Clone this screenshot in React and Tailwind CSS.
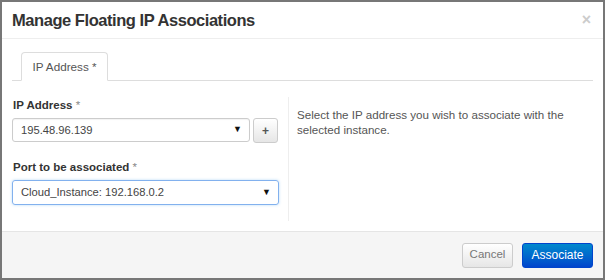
import React from "react";

export default function App() {
  return (
    <div className="w-[605px] h-[280px] bg-[#777] p-[2px] box-border" style={{ fontFamily: '"Liberation Sans", Arial, sans-serif' }}>
      <div className="w-full h-full bg-white flex flex-col">
        {/* header */}
        <div className="h-[37px] border-b border-[#eeeeee] flex items-center justify-between pl-[10px] pr-[12px] shrink-0">
          <h3 className="text-[16.5px] tracking-[-0.45px] font-bold text-[#333] leading-none">Manage Floating IP Associations</h3>
          <span className="text-[16px] font-bold text-[#ccc] leading-none">×</span>
        </div>
        {/* body */}
        <div className="flex-1 px-[10px] pt-[13px]">
          <div className="flex border-b border-[#dddddd] h-[29px]">
            <div className="ml-[9px] w-[87px] border border-[#dddddd] border-b-white rounded-t-[4px] bg-white -mb-px flex items-center justify-center text-[11.7px] text-[#555]">
              IP Address *
            </div>
          </div>
          <div className="flex mt-[16px]">
            <div className="w-[277px] pr-[10px] border-r border-[#eeeeee] pb-[16px]">
              <div className="text-[11.5px] font-bold text-[#333] leading-[16px] pl-[1px]">IP Address <span className="font-normal text-[#888]">*</span></div>
              <div className="flex gap-[3px] mt-[5px]">
                <div className="w-[238px] h-[24px] border border-[#ccc] rounded-[3px] flex items-center justify-between pl-[8px] pr-[7px] text-[11.2px] text-[#444] shadow-[inset_0_1px_1px_rgba(0,0,0,0.05)]">
                  <span>195.48.96.139</span>
                  <span className="text-[9px] text-[#111]">▼</span>
                </div>
                <div className="w-[25px] h-[25px] border border-[#ccc] rounded-[3px] bg-gradient-to-b from-white to-[#e6e6e6] flex items-center justify-center text-[12px] font-bold text-[#555]">+</div>
              </div>
              <div className="text-[11.5px] font-bold text-[#333] leading-[16px] pl-[1px] mt-[16px]">Port to be associated <span className="font-normal text-[#888]">*</span></div>
              <div className="w-[267px] h-[25px] mt-[5px] border border-[#82b1ee] rounded-[3px] flex items-center justify-between pl-[8px] pr-[7px] text-[11.2px] text-[#444] shadow-[0_0_3px_rgba(82,168,236,0.4)]">
                <span>Cloud_Instance: 192.168.0.2</span>
                <span className="text-[9px] text-[#111]">▼</span>
              </div>
            </div>
            <div className="pl-[8px] pt-[10px] text-[11.6px] text-[#555] leading-[15px] w-[290px]">
              Select the IP address you wish to associate with the selected instance.
            </div>
          </div>
        </div>
        {/* footer */}
        <div className="h-[47px] bg-[#f5f5f5] border-t border-[#e5e5e5] flex items-center justify-end gap-[9px] pr-[10px] shrink-0">
          <button className="h-[25px] w-[51px] border border-[#ccc] rounded-[3px] bg-gradient-to-b from-white to-[#e6e6e6] text-[11.5px] text-[#777]">Cancel</button>
          <button className="h-[25px] w-[71px] border border-[#0044cc] rounded-[3px] bg-gradient-to-b from-[#0088cc] to-[#0044cc] text-[12px] text-white">Associate</button>
        </div>
      </div>
    </div>
  );
}
